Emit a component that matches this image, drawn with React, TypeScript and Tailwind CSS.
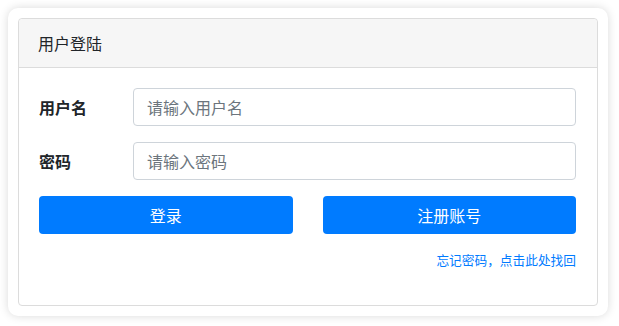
export default function App() {
  const font = { fontFamily: '"Noto Sans CJK SC", "Noto Sans", sans-serif' };
  return (
    <div className="w-[619px] h-[326px] bg-white pt-[8px] pl-[8px]" style={font}>
      <div className="w-[600px] h-[308px] bg-white rounded-[10px] shadow-[0_0_10px_rgba(0,0,0,0.15)] p-[10px]">
        <div className="h-[288px] border border-[#dcdcdc] rounded-[4px] flex flex-col">
          <div className="h-[49px] bg-[#f6f6f6] border-b border-[#dcdcdc] rounded-t-[4px] flex items-center pl-[19px] text-[16px] text-[#212529]">
            用户登陆
          </div>
          <div className="flex flex-col pt-[20px] pl-[20px] pr-[21px]">
            <div className="flex items-center h-[38px]">
              <div className="w-[94px] text-[16px] font-bold text-[#212529]">用户名</div>
              <input
                className="flex-1 h-[38px] border border-[#ced4da] rounded-[4px] px-[13px] text-[16px] placeholder:text-[#6c757d] outline-none"
                placeholder="请输入用户名"
                style={font}
              />
            </div>
            <div className="flex items-center h-[38px] mt-[16px]">
              <div className="w-[94px] text-[16px] font-bold text-[#212529]">密码</div>
              <input
                className="flex-1 h-[38px] border border-[#ced4da] rounded-[4px] px-[13px] text-[16px] placeholder:text-[#6c757d] outline-none"
                placeholder="请输入密码"
                style={font}
              />
            </div>
            <div className="flex gap-[30px] mt-[16px]">
              <button className="flex-1 h-[38px] bg-[#007bff] text-white text-[16px] rounded-[4px]" style={font}>登录</button>
              <button className="flex-1 h-[38px] bg-[#007bff] text-white text-[16px] rounded-[4px]" style={font}>注册账号</button>
            </div>
            <div className="flex justify-end mt-[17px] text-[12.7px] text-[#007bff] leading-[18px]">
              忘记密码，点击此处找回
            </div>
          </div>
        </div>
      </div>
    </div>
  );
}
